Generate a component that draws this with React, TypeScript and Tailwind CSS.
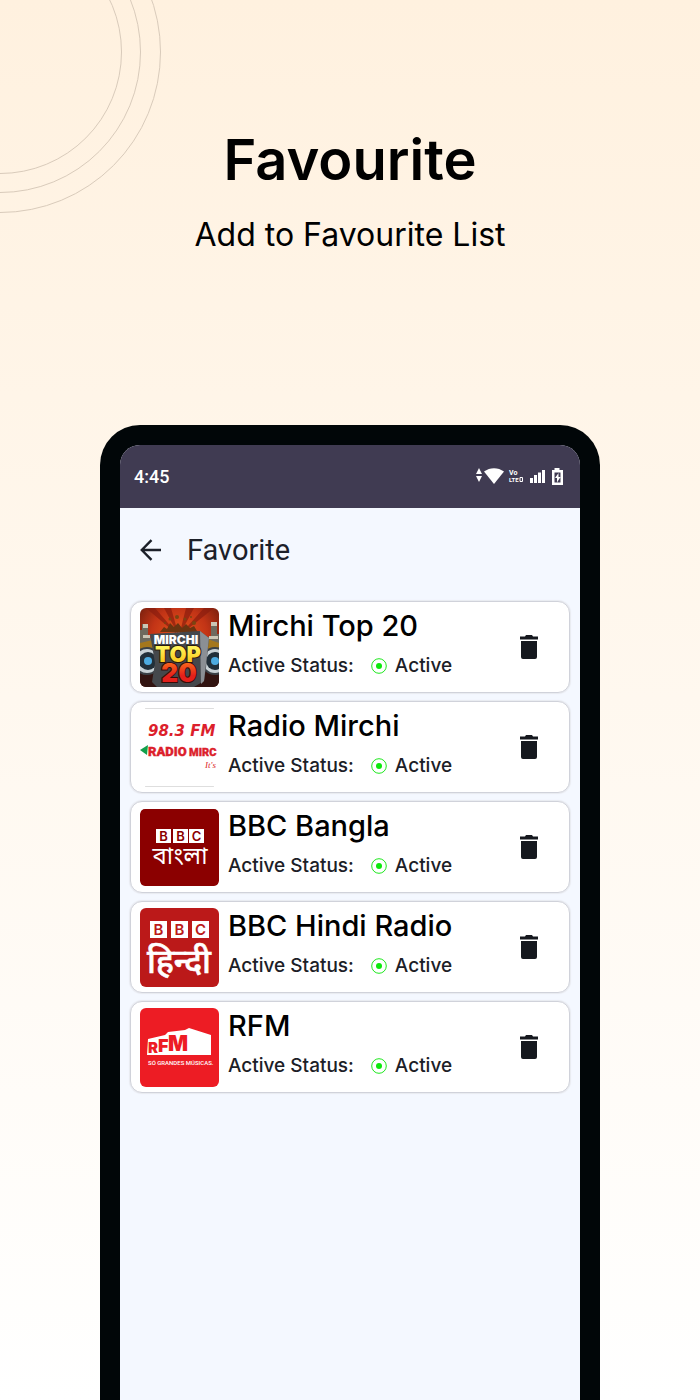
import { useState } from 'react';
import type { ReactNode } from 'react';

interface Station {
  id: string;
  name: string;
  logo: ReactNode;
}

function MirchiTopLogo() {
  return (
    <svg viewBox="0 0 79 79" className="size-full" role="img" aria-label="Mirchi Top 20">
      <defs>
        <radialGradient id="glow" cx="50%" cy="35%" r="65%">
          <stop offset="0" stopColor="#e8571c" />
          <stop offset="0.55" stopColor="#c23416" />
          <stop offset="1" stopColor="#6d1d0d" />
        </radialGradient>
        <linearGradient id="gold" x1="0" y1="0" x2="0" y2="1">
          <stop offset="0.25" stopColor="#fff35a" />
          <stop offset="0.9" stopColor="#f9c011" />
        </linearGradient>
        <linearGradient id="fire" x1="0" y1="0" x2="0" y2="1">
          <stop offset="0.2" stopColor="#f9641c" />
          <stop offset="0.6" stopColor="#e3201b" />
        </linearGradient>
      </defs>
      <rect width="79" height="79" fill="url(#glow)" />
      <path d="M39 28 L6 0 H15 Z M39 28 L24 0 H31 Z M39 28 L46 0 H54 Z M39 28 L64 0 H74 Z" fill="#8a1d0e" opacity="0.7" />
      <path d="M20 24 l4-5 3 2 3-6 4 4 4-4 4 5 4-4 4 4 4-2 3 5 3 1Z" fill="#6b3410" />
      <g fill="#7a4511">
        <circle cx="30" cy="11" r="1.5" /><circle cx="37" cy="9" r="2" /><circle cx="45" cy="11" r="1.5" />
        <circle cx="51" cy="9" r="1" /><circle cx="54" cy="15" r="2" /><circle cx="25" cy="15" r="1" />
      </g>
      <path d="M2 16 h6 v14 h6 v12 H0 V22 h2Z M71 14 h6 v12 h2 v17 H66 V29 h5Z" fill="#6e6a5e" />
      <path d="M3 16 h5 v4 H3Z M71 14 h6 v4 h-6Z M3 27 h7 v3 H3Z M69 28 h9 v3 h-9Z" fill="#cbc6b5" />
      <path d="M0 35 l17-4 v14 L0 49Z M79 35 l-14-5 v16l14 4Z" fill="#a4771c" />
      <path d="M0 60 h79 v19 H0Z" fill="#321411" />
      <circle cx="7" cy="53" r="14" fill="#3a4147" />
      <circle cx="7" cy="53" r="12" fill="#c9d2d6" />
      <circle cx="8" cy="53" r="9" fill="#22303a" />
      <circle cx="8" cy="53" r="4" fill="#4dabe0" />
      <circle cx="75" cy="53" r="14" fill="#3a4147" />
      <circle cx="75" cy="53" r="12" fill="#c9d2d6" />
      <circle cx="75" cy="53" r="9" fill="#22303a" />
      <circle cx="75" cy="53" r="4" fill="#4dabe0" />
      <path d="M10 26 L60 23 L69 30 L66 60 L64 73 L54 79 H17 L12 74 L15 55Z" fill="#45484c" />
      <path d="M60 23 L69 30 L64 73 L61 76Z" fill="#8b8f94" />
      <g fontFamily="Inter, sans-serif" fontWeight="900" textAnchor="middle">
        <text x="36" y="36" fontSize="12" fill="#fff">MIRCHI</text>
        <text x="38" y="54" fontSize="22" fill="url(#gold)" stroke="#2c1b0c" strokeWidth="2" paintOrder="stroke">TOP</text>
        <text x="39" y="74" fontSize="26" fill="url(#fire)" stroke="#360c09" strokeWidth="2" paintOrder="stroke">20</text>
      </g>
    </svg>
  );
}

function RadioMirchiLogo() {
  return (
    <svg viewBox="0 0 79 79" className="size-full" role="img" aria-label="98.3 FM Radio Mirchi">
      <rect width="79" height="79" fill="#fff" />
      <path d="M5 0.5H74M5 78.5H74" stroke="#dedede" />
      <path d="M0 42 L8 37 L7 47 Z" fill="#12a04b" />
      <g fill="#dc1f2c">
        <text x="8" y="28" fontSize="15" fontFamily="DejaVu Sans, sans-serif" fontWeight="700" fontStyle="italic">98.3 FM</text>
        <g fontFamily="Roboto, sans-serif" fontWeight="900" stroke="#dc1f2c" strokeWidth="0.4">
          <text x="8" y="48" fontSize="13">RADIO</text>
          <text x="49" y="48" fontSize="11">MIRC</text>
        </g>
        <text x="65" y="60" fontSize="9" fontFamily="Liberation Serif, serif" fontStyle="italic">It's</text>
      </g>
    </svg>
  );
}

function BbcBanglaLogo() {
  return (
    <svg viewBox="0 0 79 79" className="size-full" role="img" aria-label="BBC বাংলা">
      <rect y="1" width="79" height="77" rx="5" fill="#8b0000" />
      <path d="M16 21h15v14H16zM33 21h15v14H33zM49 21h15v14H49z" fill="#fff" />
      <g fontFamily="Inter, sans-serif" fontWeight="600" fontSize="13" fill="#8b0000" textAnchor="middle">
        <text x="23.5" y="33">B</text>
        <text x="40.5" y="33">B</text>
        <text x="56.5" y="33">C</text>
      </g>
      <text x="40" y="56" fontFamily="Noto Sans Bengali, Noto Sans, sans-serif" fontSize="24" fill="#fff" textAnchor="middle">বাংলা</text>
    </svg>
  );
}

function BbcHindiLogo() {
  return (
    <svg viewBox="0 0 79 79" className="size-full" role="img" aria-label="BBC हिन्दी">
      <rect width="79" height="79" fill="#bb1919" />
      <path d="M10 13h17v17H10zM31 13h17v17H31zM52 13h17v17H52z" fill="#fff" />
      <g fontFamily="Inter, sans-serif" fontWeight="600" fontSize="15" fill="#bb1919" textAnchor="middle">
        <text x="18.5" y="27">B</text>
        <text x="39.5" y="27">B</text>
        <text x="60.5" y="27">C</text>
      </g>
      <text x="39" y="65" fontFamily="Noto Sans Devanagari, Noto Sans, sans-serif" fontWeight="500" fontSize="33" fill="#fff" stroke="#fff" strokeWidth="0.6" textAnchor="middle">हिन्दी</text>
    </svg>
  );
}

function RfmLogo() {
  return (
    <svg viewBox="0 0 79 79" className="size-full" role="img" aria-label="RFM">
      <rect width="79" height="79" fill="#ed1c24" />
      <path d="M8 31 L25 27 L28 24 L45 22 L49 20 L71 27 V47 H7 Z" fill="#fff" />
      <g fontFamily="Inter, sans-serif" fontWeight="900" fill="#ed1c24">
        <text x="8" y="45" fontSize="15">R</text>
        <text x="18" y="44" fontSize="18">F</text>
        <text x="28" y="43" fontSize="21">M</text>
      </g>
      <text x="8" y="57" fontFamily="Roboto, sans-serif" fontWeight="500" fontSize="6" fill="#fff">SÓ GRANDES MÚSICAS.</text>
    </svg>
  );
}

const stations: Station[] = [
  { id: 'mirchi-top-20', name: 'Mirchi Top 20', logo: <MirchiTopLogo /> },
  { id: 'radio-mirchi', name: 'Radio Mirchi', logo: <RadioMirchiLogo /> },
  { id: 'bbc-bangla', name: 'BBC Bangla', logo: <BbcBanglaLogo /> },
  { id: 'bbc-hindi', name: 'BBC Hindi Radio', logo: <BbcHindiLogo /> },
  { id: 'rfm', name: 'RFM', logo: <RfmLogo /> },
];

function StatusIcons() {
  return (
    <svg viewBox="0 0 90 20" className="h-5 w-[90px]" fill="#fff" aria-hidden="true">
      <path d="M5 1 L8 7 H2 Z M2 9 H8 L5 15 Z" />
      <path d="M10 4.500 C16 0 24 0 30 4.500 L20 17 Z" />
      <g fontFamily="Roboto, sans-serif" fontWeight="700">
        <text x="35" y="8" fontSize="7">Vo</text>
        <text x="35" y="15" fontSize="6">LTE</text>
      </g>
      <path d="M46 10.500h2.500v4h-2.500z" fill="none" stroke="#fff" />
      <path d="M56 11h3v5h-3zM60 8h3v8h-3zM64 5.500h3v10.500h-3zM68 3h3v13h-3z" />
      <path fillRule="evenodd" d="M80.500 1h5v2h3.500v15H78V3h2.500ZM80.500 5.500v10h6v-10ZM84.500 6v4h2l-3.500 5.500v-4.500h-2Z" />
    </svg>
  );
}

function StationCard({ station, onRemove }: { station: Station; onRemove: () => void }) {
  return (
    <li className="flex h-[92px] items-center rounded-xl border border-[#d0d2da] bg-white pl-[9px] pr-6 shadow-[0_0_1px_1px_#e8eaf0]">
      <div className="size-[79px] shrink-0 overflow-hidden rounded-md">{station.logo}</div>
      <div className="ml-[9px] flex-1 whitespace-nowrap">
        <h3 className="text-[29px] font-medium leading-9 text-black">{station.name}</h3>
        <p className="mb-0.5 mt-1 flex h-9 items-center text-[19px] font-medium text-[#1c2027]">
          Active Status:
          <svg viewBox="0 0 16 16" className="ml-[17px] mr-2 size-4" aria-hidden="true">
            <circle cx="8" cy="8" r="7.3" fill="none" stroke="#1ee81e" />
            <circle cx="8" cy="8" r="3" fill="#0be80b" />
          </svg>
          Active
        </p>
      </div>
      <button onClick={onRemove} aria-label={`Remove ${station.name}`} className="flex size-8 cursor-pointer items-center justify-center">
        <svg viewBox="0 0 18 24" className="h-6 w-[18px]" fill="#15181e">
          <path d="M0 1.5h5L6 0h6l1 1.5h5v3H0z M1 6h16v16q0 2-2 2H3q-2 0-2-2z" />
        </svg>
      </button>
    </li>
  );
}

export default function App() {
  const [favorites, setFavorites] = useState(stations);

  const remove = (id: string) => setFavorites(favorites.filter(s => s.id !== id));

  return (
    <div className="relative flex min-h-screen flex-col overflow-hidden bg-linear-to-b from-[#fff1df] to-white font-['Inter',sans-serif]">
      {/* Decorative rings in the corner */}
      <svg viewBox="0 0 170 220" className="absolute left-0 top-0 h-[220px] w-[170px]" fill="none" stroke="#d9cbbb" aria-hidden="true">
        <circle cx="0" cy="52" r="121.5" />
        <circle cx="0" cy="52" r="140.5" />
        <circle cx="0" cy="52" r="160.5" />
      </svg>

      <header className="px-6 pt-[124px] text-center text-black">
        <h1 className="text-[56px] font-semibold leading-[72px]">Favourite</h1>
        <p className="mt-[19px] text-[32px] leading-10">Add to Favourite List</p>
      </header>

      <main className="mx-auto mt-[170px] flex w-full max-w-[500px] flex-1 flex-col rounded-t-[40px] bg-[#010608] px-5 pt-5">
        <div className="flex flex-1 flex-col overflow-hidden rounded-t-[20px] bg-[#f4f8ff]">
          <div className="flex h-[63px] items-center justify-between bg-[#403b52] pl-[14px] pr-4 font-['Roboto',sans-serif] text-white">
            <span className="text-lg font-medium">4:45</span>
            <StatusIcons />
          </div>

          <div className="flex h-[84px] items-center gap-[26px] pl-5 font-['Roboto',sans-serif] text-[#1c2029]">
            <button aria-label="Back" className="cursor-pointer">
              <svg viewBox="0 0 21 22" className="h-[22px] w-[21px]" fill="none" stroke="currentColor" strokeWidth="2.4">
                <path d="M21 11H2M11.5 1.2L1.8 11l9.7 9.8" />
              </svg>
            </button>
            <h2 className="text-[29px] leading-9">Favorite</h2>
          </div>

          <ul className="mt-2 flex flex-col gap-2 px-[10px] pt-px pb-6">
            {favorites.map(station => (
              <StationCard key={station.id} station={station} onRemove={() => remove(station.id)} />
            ))}
          </ul>
        </div>
      </main>
    </div>
  );
}
